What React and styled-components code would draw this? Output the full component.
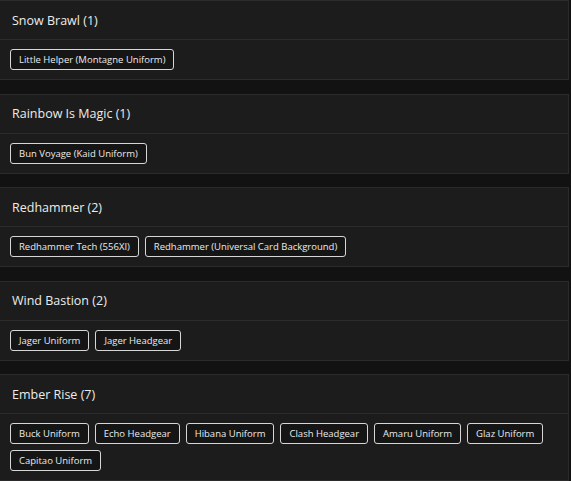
import React from 'react';
import styled, { createGlobalStyle } from 'styled-components';

const GlobalStyle = createGlobalStyle`
  html, body {
    margin: 0;
    padding: 0;
    background: #121212;
  }
  body {
    font-family: 'Open Sans', 'Noto Sans', sans-serif;
    color: #e6e6e6;
  }
`;

const events = [
  { name: 'Snow Brawl', items: ['Little Helper (Montagne Uniform)'] },
  { name: 'Rainbow Is Magic', items: ['Bun Voyage (Kaid Uniform)'] },
  {
    name: 'Redhammer',
    items: ['Redhammer Tech (556XI)', 'Redhammer (Universal Card Background)'],
  },
  { name: 'Wind Bastion', items: ['Jager Uniform', 'Jager Headgear'] },
  {
    name: 'Ember Rise',
    items: [
      'Buck Uniform',
      'Echo Headgear',
      'Hibana Uniform',
      'Clash Headgear',
      'Amaru Uniform',
      'Glaz Uniform',
      'Capitao Uniform',
    ],
  },
];

const App = () => {
  return (
    <Page>
      <GlobalStyle />
      {events.map((event) => (
        <Card key={event.name}>
          <CardHeader>
            {event.name} ({event.items.length})
          </CardHeader>
          <CardBody>
            {event.items.map((item) => (
              <ItemTag key={item}>{item}</ItemTag>
            ))}
          </CardBody>
        </Card>
      ))}
    </Page>
  );
};

const Page = styled.div`
  display: flex;
  flex-direction: column;
  gap: 13.5px;
  padding-right: 2px;
`;

const Card = styled.section`
  background: #1c1c1c;
  border: 1px solid #2b2b2b;
  border-left: none;
`;

const CardHeader = styled.h3`
  margin: 0;
  height: 38px;
  display: flex;
  align-items: center;
  padding-left: 12px;
  border-bottom: 1px solid #2b2b2b;
  font-size: 12.5px;
  font-weight: 500;
  color: #ececec;
`;

const CardBody = styled.div`
  display: flex;
  flex-wrap: wrap;
  gap: 6px;
  padding: 9px 10px;
`;

const ItemTag = styled.span`
  display: inline-flex;
  align-items: center;
  height: 21px;
  box-sizing: border-box;
  padding: 0 8px;
  border: 1.5px solid #d6d6d6;
  border-radius: 3px;
  background: #151515;
  font-size: 9.5px;
  color: #ebebeb;
  white-space: nowrap;
`;

export default App;
